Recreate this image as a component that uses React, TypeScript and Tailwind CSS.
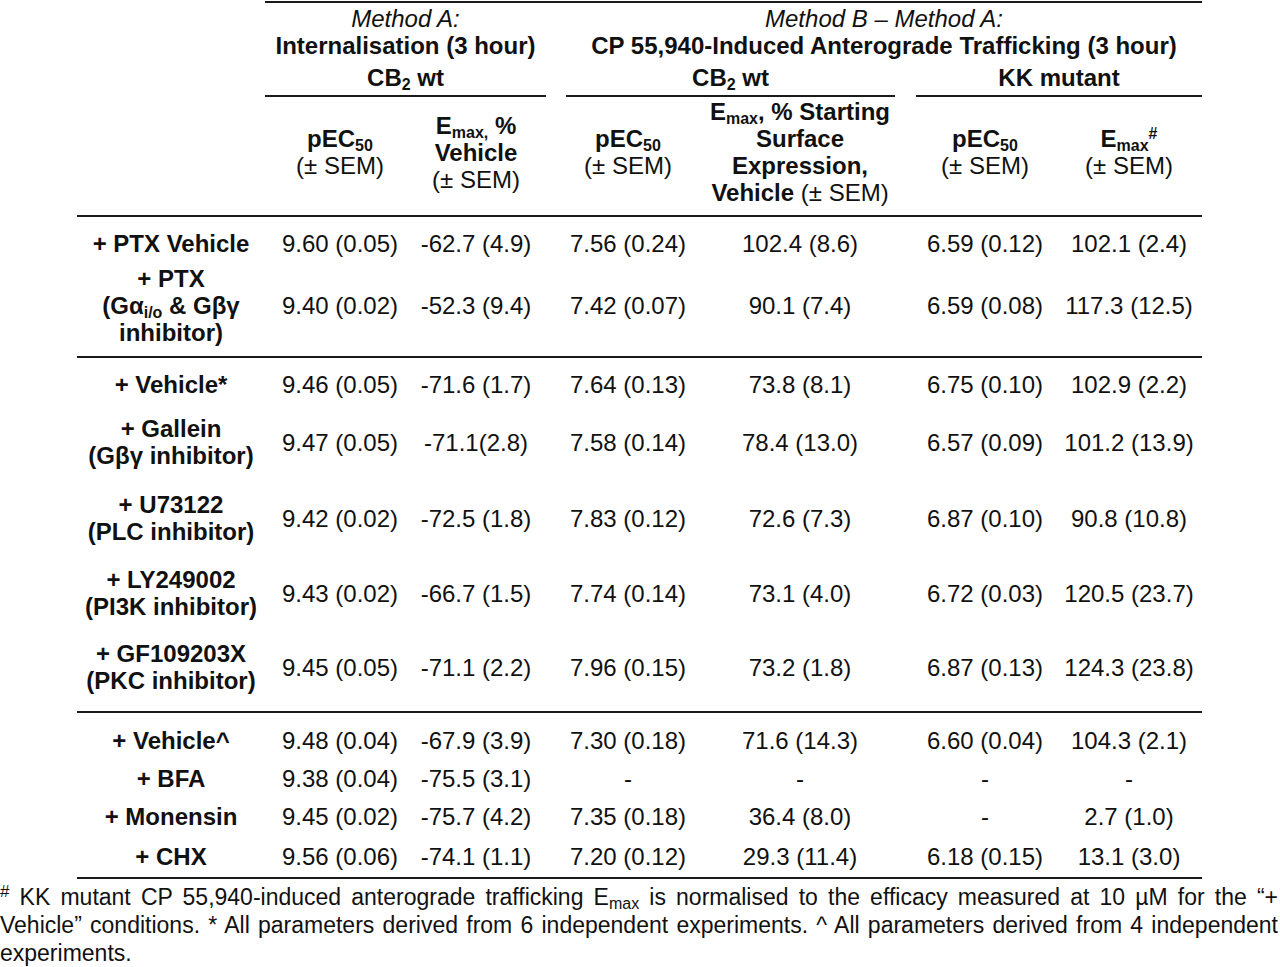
import * as React from "react"

// column grid shared by the column-header row and the data rows
const cols = "ml-[77px] grid grid-cols-[188px_150px_122px_182px_162px_208px_113px] items-center"

type Row = {
    label: React.ReactNode[]
    values: string[]
    gap: string
}

const Rule = ({ className = "" }: { className?: string }) => (
    <div className={"h-[2px] bg-[#1a1a1a] " + className} />
)

const Sub = ({ children }: { children: React.ReactNode }) => (
    <sub className="text-[16px]">{children}</sub>
)

const rows1: Row[] = [
    {
        label: ["+ PTX Vehicle"],
        values: ["9.60 (0.05)", "-62.7 (4.9)", "7.56 (0.24)", "102.4 (8.6)", "6.59 (0.12)", "102.1 (2.4)"],
        gap: "mt-[13px]",
    },
    {
        label: [
            "+ PTX",
            <>
                (Gα<Sub>i/o</Sub> & Gβγ
            </>,
            "inhibitor)",
        ],
        values: ["9.40 (0.02)", "-52.3 (9.4)", "7.42 (0.07)", "90.1 (7.4)", "6.59 (0.08)", "117.3 (12.5)"],
        gap: "mt-[8px]",
    },
]

const rows2: Row[] = [
    {
        label: ["+ Vehicle*"],
        values: ["9.46 (0.05)", "-71.6 (1.7)", "7.64 (0.13)", "73.8 (8.1)", "6.75 (0.10)", "102.9 (2.2)"],
        gap: "mt-[13px]",
    },
    {
        label: ["+ Gallein", "(Gβγ inhibitor)"],
        values: ["9.47 (0.05)", "-71.1(2.8)", "7.58 (0.14)", "78.4 (13.0)", "6.57 (0.09)", "101.2 (13.9)"],
        gap: "mt-[17px]",
    },
    {
        label: ["+ U73122", "(PLC inhibitor)"],
        values: ["9.42 (0.02)", "-72.5 (1.8)", "7.83 (0.12)", "72.6 (7.3)", "6.87 (0.10)", "90.8 (10.8)"],
        gap: "mt-[22px]",
    },
    {
        label: ["+ LY249002", "(PI3K inhibitor)"],
        values: ["9.43 (0.02)", "-66.7 (1.5)", "7.74 (0.14)", "73.1 (4.0)", "6.72 (0.03)", "120.5 (23.7)"],
        gap: "mt-[21px]",
    },
    {
        label: ["+ GF109203X", "(PKC inhibitor)"],
        values: ["9.45 (0.05)", "-71.1 (2.2)", "7.96 (0.15)", "73.2 (1.8)", "6.87 (0.13)", "124.3 (23.8)"],
        gap: "mt-[20px]",
    },
]

const rows3: Row[] = [
    {
        label: ["+ Vehicle^"],
        values: ["9.48 (0.04)", "-67.9 (3.9)", "7.30 (0.18)", "71.6 (14.3)", "6.60 (0.04)", "104.3 (2.1)"],
        gap: "mt-[14px]",
    },
    {
        label: ["+ BFA"],
        values: ["9.38 (0.04)", "-75.5 (3.1)", "-", "-", "-", "-"],
        gap: "mt-[11px]",
    },
    {
        label: ["+ Monensin"],
        values: ["9.45 (0.02)", "-75.7 (4.2)", "7.35 (0.18)", "36.4 (8.0)", "-", "2.7 (1.0)"],
        gap: "mt-[11px]",
    },
    {
        label: ["+ CHX"],
        values: ["9.56 (0.06)", "-74.1 (1.1)", "7.20 (0.12)", "29.3 (11.4)", "6.18 (0.15)", "13.1 (3.0)"],
        gap: "mt-[13px]",
    },
]

function DataRow({ row }: { row: Row }) {
    return (
        <div className={cols + " " + row.gap}>
            <div className="flex flex-col items-center font-bold whitespace-nowrap">
                {row.label.map((l, i) => (
                    <div key={i}>{l}</div>
                ))}
            </div>
            {row.values.map((v, i) => (
                <div
                    key={i}
                    className={
                        "flex justify-center whitespace-nowrap" + (i === 5 ? " pr-[33px]" : "")
                    }
                >
                    {v}
                </div>
            ))}
        </div>
    )
}

export default function App() {
    return (
        <div className="w-[1280px] h-[967px] overflow-hidden bg-white text-[#111] text-[24px] leading-[27px] font-['Liberation_Sans',Arial,sans-serif]">
            {/* Group headers */}
            <Rule className="ml-[265px] w-[937px] mt-[1px]" />
            <div className="ml-[265px] flex">
                <div className="w-[281px] flex flex-col items-center pt-[2px]">
                    <div className="italic">Method A:</div>
                    <div className="font-bold">Internalisation (3 hour)</div>
                    <div className="font-bold mt-[5px]">
                        CB<Sub>2</Sub> wt
                    </div>
                    <Rule className="mt-[4px] self-stretch" />
                </div>
                <div className="ml-[20px] w-[636px] flex flex-col items-center pt-[2px]">
                    <div className="italic">Method B – Method A:</div>
                    <div className="font-bold whitespace-nowrap">
                        CP 55,940-Induced Anterograde Trafficking (3 hour)
                    </div>
                    <div className="mt-[5px] flex self-stretch">
                        <div className="w-[329px] flex flex-col items-center">
                            <div className="font-bold">
                                CB<Sub>2</Sub> wt
                            </div>
                            <Rule className="mt-[4px] self-stretch" />
                        </div>
                        <div className="ml-[21px] w-[286px] flex flex-col items-center">
                            <div className="font-bold">KK mutant</div>
                            <Rule className="mt-[4px] self-stretch" />
                        </div>
                    </div>
                </div>
            </div>

            {/* Column headers */}
            <div className={cols + " h-[110px]"}>
                <div />
                <div className="flex flex-col items-center">
                    <div className="font-bold">
                        pEC<Sub>50</Sub>
                    </div>
                    <div>(± SEM)</div>
                </div>
                <div className="flex flex-col items-center whitespace-nowrap">
                    <div className="font-bold">
                        E<Sub>max,</Sub> %
                    </div>
                    <div className="font-bold">Vehicle</div>
                    <div>(± SEM)</div>
                </div>
                <div className="flex flex-col items-center">
                    <div className="font-bold">
                        pEC<Sub>50</Sub>
                    </div>
                    <div>(± SEM)</div>
                </div>
                <div className="flex flex-col items-center whitespace-nowrap">
                    <div className="font-bold">
                        E<Sub>max</Sub>, % Starting
                    </div>
                    <div className="font-bold">Surface</div>
                    <div className="font-bold">Expression,</div>
                    <div>
                        <span className="font-bold">Vehicle</span> (± SEM)
                    </div>
                </div>
                <div className="flex flex-col items-center">
                    <div className="font-bold">
                        pEC<Sub>50</Sub>
                    </div>
                    <div>(± SEM)</div>
                </div>
                <div className="flex flex-col items-center pr-[33px] whitespace-nowrap">
                    <div className="font-bold">
                        E<Sub>max</Sub>
                        <sup className="text-[16px]">#</sup>
                    </div>
                    <div>(± SEM)</div>
                </div>
            </div>
            <Rule className="ml-[77px] w-[1125px] mt-[8px]" />

            {rows1.map((r, i) => (
                <DataRow key={i} row={r} />
            ))}
            <Rule className="ml-[77px] w-[1125px] mt-[10px]" />

            {rows2.map((r, i) => (
                <DataRow key={i} row={r} />
            ))}
            <Rule className="ml-[77px] w-[1125px] mt-[17px]" />

            {rows3.map((r, i) => (
                <DataRow key={i} row={r} />
            ))}
            <Rule className="ml-[77px] w-[1125px] mt-[7px]" />

            {/* Footnote */}
            <div className="mt-[4px] w-[1278px] text-[23px] leading-[28px]">
                <div className="text-justify [text-align-last:justify] whitespace-nowrap">
                    <sup className="text-[17px]">#</sup> KK mutant CP 55,940-induced anterograde trafficking E
                    <Sub>max</Sub> is normalised to the efficacy measured at 10 µM for the “+
                </div>
                <div className="text-justify [text-align-last:justify] whitespace-nowrap">
                    Vehicle” conditions. * All parameters derived from 6 independent experiments. ^ All
                    parameters derived from 4 independent
                </div>
                <div>experiments.</div>
            </div>
        </div>
    )
}
